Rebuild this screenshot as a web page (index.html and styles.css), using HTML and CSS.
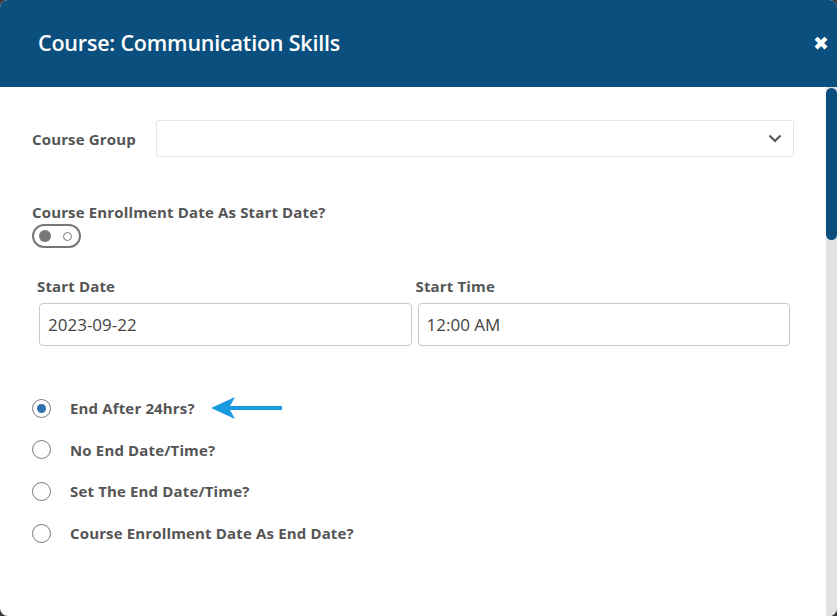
FILE: index.html
```html
<!DOCTYPE html>
<html>
<head>
<meta charset="utf-8">
<link rel="stylesheet" href="styles.css">
</head>
<body>
<div class="modal">
  <header class="modal-header">
    <h1 class="title">Course: Communication Skills</h1>
    <span class="close">&#10006;</span>
  </header>
  <div class="modal-main">
    <div class="modal-body">
      <div class="row-group">
        <label class="lbl">Course Group</label>
        <div class="select">
          <svg class="chev" width="14" height="9" viewBox="0 0 14 9"><path d="M1.5 1.5 L7 7 L12.5 1.5" fill="none" stroke="#555" stroke-width="2"/></svg>
        </div>
      </div>

      <div class="enroll">
        <div class="lbl">Course Enrollment Date As Start Date?</div>
        <div class="toggle"><span class="dot-on"></span><span class="dot-off"></span></div>
      </div>

      <div class="dates">
        <div class="field">
          <div class="lbl">Start Date</div>
          <div class="input">2023-09-22</div>
        </div>
        <div class="field">
          <div class="lbl">Start Time</div>
          <div class="input">12:00 AM</div>
        </div>
      </div>

      <div class="radios">
        <div class="radio-row">
          <span class="radio checked"></span>
          <span class="lbl">End After 24hrs?</span>
          <svg class="arrow" width="72" height="24" viewBox="0 0 72 24"><path d="M0 12 L24 1 L19 10 L71 10 L71 14 L19 14 L24 23 Z" fill="#1a9be0"/></svg>
        </div>
        <div class="radio-row">
          <span class="radio"></span>
          <span class="lbl">No End Date/Time?</span>
        </div>
        <div class="radio-row">
          <span class="radio"></span>
          <span class="lbl">Set The End Date/Time?</span>
        </div>
        <div class="radio-row">
          <span class="radio"></span>
          <span class="lbl">Course Enrollment Date As End Date?</span>
        </div>
      </div>
    </div>
    <div class="scrollbar"><div class="thumb"></div></div>
  </div>
</div>
</body>
</html>
```
FILE: styles.css
```css
html, body {
  margin: 0;
  padding: 0;
  background: #3b3b3b;
  width: 837px;
  height: 616px;
  overflow: hidden;
}
.modal {
  width: 837px;
  height: 616px;
  border-radius: 8px;
  overflow: hidden;
  background: #fff;
  display: flex;
  flex-direction: column;
  font-family: "Open Sans", "Noto Sans", sans-serif;
}
.modal-header {
  height: 87px;
  flex: none;
  background: #0b4f7e;
  display: flex;
  align-items: center;
  justify-content: space-between;
  padding: 0 8px 0 38px;
  box-sizing: border-box;
}
.title {
  margin: 0;
  color: #fff;
  font-size: 21.5px;
  font-weight: 600;
  letter-spacing: -0.2px;
  padding-bottom: 2px;
}
.close {
  color: #fff;
  font-size: 19px;
  font-weight: bold;
  padding-bottom: 1px;
  font-family: "DejaVu Sans", sans-serif;
}
.modal-main {
  flex: 1;
  display: flex;
}
.modal-body {
  flex: 1;
  padding: 33px 32px 0 32px;
  box-sizing: border-box;
}
.scrollbar {
  width: 11px;
  background: #e2e2e2;
  flex: none;
  padding-top: 1px;
}
.thumb {
  height: 152px;
  background: #0b4f7e;
  border-radius: 6px;
}
.lbl {
  color: #555;
  font-size: 15px;
  font-weight: 700;
  letter-spacing: 0.15px;
}
.row-group {
  display: flex;
  align-items: center;
  height: 37px;
}
.row-group .lbl {
  width: 124px;
  flex: none;
  padding-top: 0;
}
.select {
  flex: 1;
  height: 37px;
  box-sizing: border-box;
  border: 1px solid #e6e6e6;
  border-radius: 2px;
  display: flex;
  align-items: center;
  justify-content: flex-end;
  padding-right: 11px;
}
.enroll {
  margin-top: 45px;
}
.toggle {
  margin-top: 2px;
  width: 49px;
  height: 24px;
  box-sizing: border-box;
  border: 2px solid #777;
  border-radius: 12px;
  display: flex;
  align-items: center;
  justify-content: space-between;
  padding: 0 7px 0 5px;
}
.dot-on {
  width: 12px;
  height: 12px;
  border-radius: 50%;
  background: #777;
}
.dot-off {
  width: 7px;
  height: 7px;
  border-radius: 50%;
  border: 1.5px solid #777;
}
.dates {
  display: flex;
  gap: 6px;
  margin-top: 28px;
  padding: 0 4px 0 7px;
}
.field {
  flex: 1;
}
.field .lbl {
  margin-left: -2px;
}
.input {
  margin-top: 7px;
  height: 43px;
  box-sizing: border-box;
  border: 1px solid #c8c8c8;
  border-radius: 4px;
  display: flex;
  align-items: center;
  padding-left: 8px;
  font-size: 17px;
  color: #444;
}
.radios {
  margin-top: 52px;
  display: flex;
  flex-direction: column;
  gap: 21.7px;
}
.radio-row {
  display: flex;
  align-items: center;
  height: 20px;
}
.radio {
  width: 19px;
  height: 19px;
  box-sizing: border-box;
  border: 1px solid #7a7a7a;
  border-radius: 50%;
  margin-right: 19px;
  flex: none;
  display: flex;
  align-items: center;
  justify-content: center;
}
.radio.checked::after {
  content: "";
  width: 9px;
  height: 9px;
  border-radius: 50%;
  background: #2f6fae;
}
.arrow {
  margin-left: 16px;
}
```
